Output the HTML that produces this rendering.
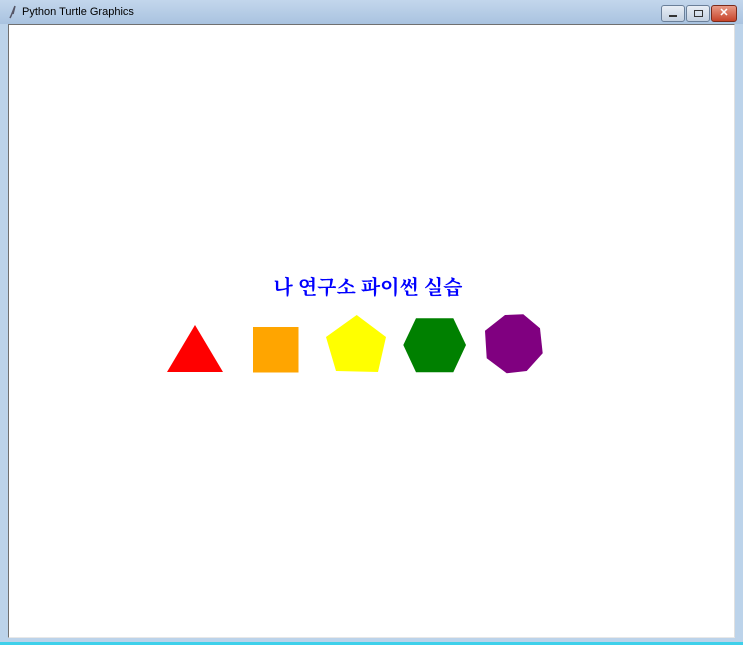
<!DOCTYPE html>
<html><head><meta charset="utf-8"><style>
html,body{margin:0;padding:0}
body{width:743px;height:645px;position:relative;overflow:hidden;background:#bcd3ea;font-family:"Liberation Sans",sans-serif}
.title{position:absolute;left:0;top:0;width:743px;height:24px;background:linear-gradient(#c3d6ec,#a9c3e0)}
.title span{position:absolute;left:22px;top:6px;font-size:11px;color:#000}
.canvas{position:absolute;left:8px;top:24px;width:725px;height:612px;background:#fff;border:1px solid #707070;border-right-color:#e0e0e0;border-bottom-color:#e8e8e8}
.bottom{position:absolute;left:0;top:642px;width:743px;height:3px;background:#3fd0ea}
.btn{position:absolute;top:5px;height:15px;border:1px solid #6a7f99;border-radius:3px;background:linear-gradient(#e8eef6,#c3d0e0)}
.txt{position:absolute;left:0;width:736px;top:271px;text-align:center;font-family:"Liberation Serif","Noto Serif CJK KR","Noto Serif CJK SC",serif;font-weight:bold;font-size:20px;color:#0000ff}
</style></head><body>
<div class="title"><svg style="position:absolute;left:8px;top:5px" width="10" height="14"><path d="M7 1 L3 11 L2 13 M7 1 L5 9" stroke="#556" stroke-width="1.5" fill="none"/></svg><span>Python Turtle Graphics</span></div>
<div class="btn" style="left:661px;width:22px"><div style="position:absolute;left:7px;top:9px;width:8px;height:2px;background:#333"></div></div>
<div class="btn" style="left:686px;width:22px"><div style="position:absolute;left:7px;top:4px;width:7px;height:5px;border:1px solid #333"></div></div>
<div class="btn" style="left:711px;width:24px;background:linear-gradient(#e89a86,#c7442a);border-color:#7a2a1a;color:#fff;font-size:11px;font-weight:bold;text-align:center;line-height:15px">✕</div>
<div class="canvas"></div>
<div class="bottom"></div>
<div class="txt">나 연구소 파이썬 실습</div>
<svg style="position:absolute;left:0;top:0" width="743" height="645">
<polygon points="167,372 223,372 195,325" fill="#ff0000"/>
<rect x="253" y="327" width="45.5" height="45.5" fill="#ffa500"/>
<polygon points="326,337 356.7,315 386,337 378,372 336,371" fill="#ffff00"/>
<polygon points="403.3,345 416,318.3 453.3,318.3 466,345 453.3,372.3 416,372.3" fill="#008000"/>
<polygon points="485,330.7 505,315 523.3,314.3 540,328.3 542.7,353.3 526.7,371 506.7,373.3 486.7,358.3" fill="#800080"/>
</svg>
</body></html>
